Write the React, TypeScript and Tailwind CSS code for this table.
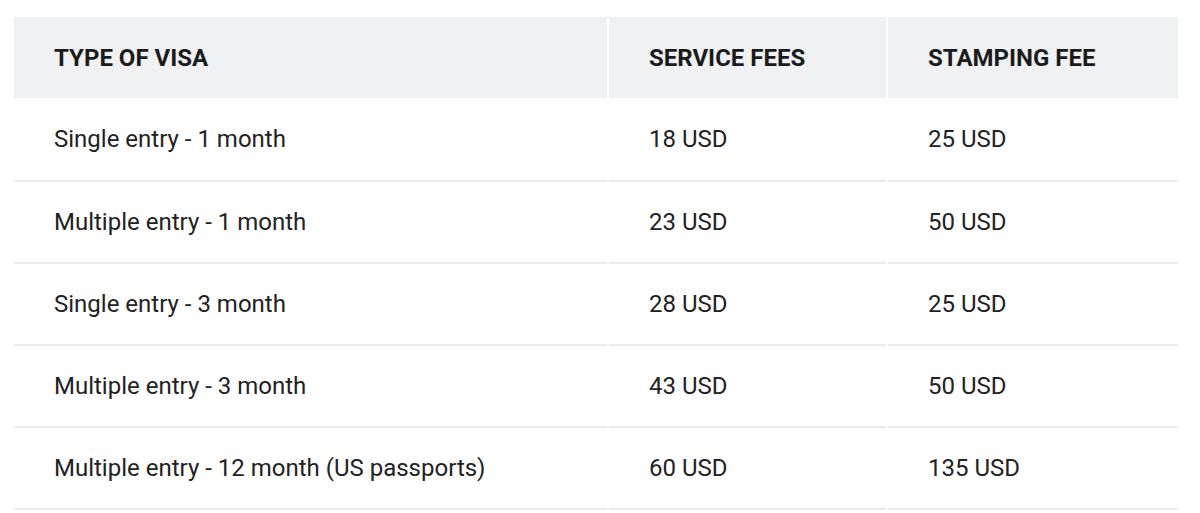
const rows = [
  { type: "Single entry - 1 month", service: "18 USD", stamping: "25 USD" },
  { type: "Multiple entry - 1 month", service: "23 USD", stamping: "50 USD" },
  { type: "Single entry - 3 month", service: "28 USD", stamping: "25 USD" },
  { type: "Multiple entry - 3 month", service: "43 USD", stamping: "50 USD" },
  { type: "Multiple entry - 12 month (US passports)", service: "60 USD", stamping: "135 USD" },
];

const cols = "grid grid-cols-[593px_277px_290px] gap-x-[2px]";

export default function App() {
  return (
    <div className="min-h-screen bg-white pt-[17px] pl-[14px] font-['Roboto',sans-serif] text-[24px]">
      {/* Header */}
      <div className={cols}>
        {["TYPE OF VISA", "SERVICE FEES", "STAMPING FEE"].map((h) => (
          <div
            key={h}
            className="h-[81px] bg-[#f0f1f3] pl-10 flex items-center font-bold text-[#1b1b1b]"
          >
            {h}
          </div>
        ))}
      </div>

      {/* Body */}
      {rows.map((r, n) => (
        <div key={r.type} className={cols}>
          {[r.type, r.service, r.stamping].map((v, i) => (
            <div
              key={i}
              className={`${n === 0 ? "h-[84px]" : "h-[82px]"} border-b-2 border-[#ebebeb] pl-10 flex items-center text-[#222]`}
            >
              {v}
            </div>
          ))}
        </div>
      ))}
    </div>
  );
}
